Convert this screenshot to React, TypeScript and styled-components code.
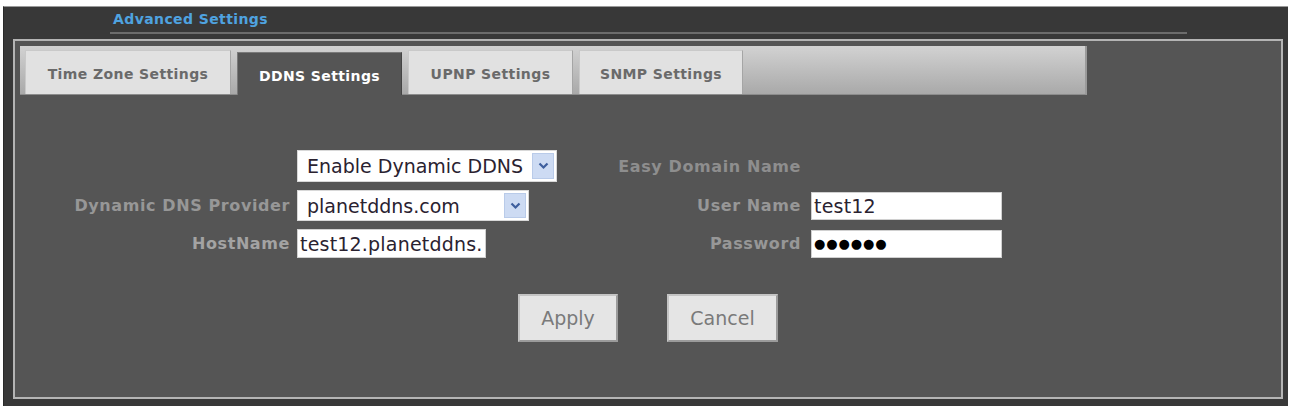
import React, {FC} from 'react';
import styled, {createGlobalStyle} from 'styled-components';

const GlobalStyle = createGlobalStyle`
  html, body {
    margin: 0;
    padding: 0;
    background: #ffffff;
  }
  body {
    font-family: "DejaVu Sans", Verdana, sans-serif;
  }
`;

const Page = styled.div`
  padding: 6px 5px 0 3px;
  width: 1285px;
`;

const Frame = styled.div`
  box-sizing: border-box;
  width: 1285px;
  height: 400px;
  background: #383838;
  border-top: 1px solid #9a9a9a;
  border-left: 1px solid #2a2a2a;
  display: flex;
  flex-direction: column;
`;

const Header = styled.div`
  box-sizing: border-box;
  margin-left: 106px;
  width: 1077px;
  height: 27px;
  padding: 4px 0 0 3px;
  border-bottom: 2px solid #6c6c6c;
  color: #4fa3e0;
  font-size: 14px;
  font-weight: bold;
  letter-spacing: 0.4px;
`;

const Panel = styled.div`
  box-sizing: border-box;
  margin: 5px 0 0 9px;
  width: 1270px;
  height: 360px;
  background: #555555;
  border: 2px solid #b4b4b4;
  padding: 5px;
  display: flex;
  flex-direction: column;
`;

const TabBar = styled.div`
  box-sizing: border-box;
  width: 1067px;
  height: 49px;
  padding-left: 5px;
  display: flex;
  align-items: flex-end;
  gap: 6px;
  background: linear-gradient(#d2d2d2, #a9a9a9);
  border-right: 2px solid #9a9a9a;
  border-bottom: 1px solid #8c8c8c;
`;

const Tab = styled.div<{$active?: boolean; $width: number}>`
  box-sizing: border-box;
  width: ${p => p.$width}px;
  height: ${p => (p.$active ? 43 : 44)}px;
  margin-bottom: ${p => (p.$active ? -1 : 0)}px;
  display: flex;
  align-items: center;
  justify-content: center;
  padding-top: 3px;
  font-size: 14px;
  font-weight: bold;
  letter-spacing: 0.4px;
  color: ${p => (p.$active ? '#ffffff' : '#6a6a6a')};
  background: ${p => (p.$active ? '#555555' : '#e1e1e1')};
  border: 1px solid ${p => (p.$active ? '#7a7a7a' : '#c9c9c9')};
  border-bottom: none;
  border-right-color: ${p => (p.$active ? '#444' : '#a5a5a5')};
`;

const Form = styled.div`
  margin-top: 55px;
  display: grid;
  grid-template-columns: 270px 259px 241px 191px;
  grid-auto-rows: auto;
  column-gap: 7px;
  row-gap: 8px;
  align-items: center;
`;

const Label = styled.div<{$tone?: string}>`
  justify-self: end;
  font-size: 16px;
  font-weight: bold;
  letter-spacing: 0.6px;
  color: ${p => p.$tone || '#979797'};
  white-space: nowrap;
`;

const RightLabel = styled(Label)`
  margin-right: 3px;
`;

const SelectBox = styled.div<{$width: number; $height: number}>`
  box-sizing: border-box;
  width: ${p => p.$width}px;
  height: ${p => p.$height}px;
  background: #ffffff;
  border: 1px solid #d8d8d8;
  display: flex;
  align-items: center;
  padding: 2px 2px 2px 9px;
  font-size: 19px;
  color: #2a2230;
`;

const SelectText = styled.span`
  flex: 1;
  white-space: nowrap;
`;

const ArrowBox = styled.span`
  box-sizing: border-box;
  width: 22px;
  align-self: stretch;
  background: #cddbf3;
  border: 1px solid #b9cbe9;
  display: flex;
  align-items: center;
  justify-content: center;
`;

const TextBox = styled.div<{$width: number; $height: number}>`
  box-sizing: border-box;
  width: ${p => p.$width}px;
  height: ${p => p.$height}px;
  background: #ffffff;
  border: 1px solid #d0d0d0;
  display: flex;
  align-items: center;
  padding: 0 2px;
  font-size: 19px;
  letter-spacing: 0.2px;
  color: #2a2230;
  white-space: nowrap;
`;

const Dots = styled.span`
  font-size: 13px;
  letter-spacing: 0.9px;
  color: #000;
`;

const Buttons = styled.div`
  margin-top: 36px;
  display: flex;
  justify-content: center;
  gap: 49px;
`;

const Button = styled.button<{$width: number}>`
  box-sizing: border-box;
  width: ${p => p.$width}px;
  height: 48px;
  background: #e5e5e5;
  border: 2px solid #9b9b9b;
  border-top-color: #c4c4c4;
  border-left-color: #c4c4c4;
  font-family: "DejaVu Sans", Verdana, sans-serif;
  font-size: 19px;
  color: #7a7a7a;
  padding: 0;
`;

const Chevron: FC = () => (
  <svg width="11" height="8" viewBox="0 0 11 8">
    <path
      d="M1.5 1.5 L5.5 5.5 L9.5 1.5"
      fill="none"
      stroke="#3e5f9e"
      strokeWidth="2.2"
    />
  </svg>
);

const tabs = [
  {name: 'Time Zone Settings', width: 206},
  {name: 'DDNS Settings', width: 165, active: true},
  {name: 'UPNP Settings', width: 165},
  {name: 'SNMP Settings', width: 164},
];

const App: FC = () => (
  <Page>
    <GlobalStyle />
    <Frame>
      <Header>Advanced Settings</Header>
      <Panel>
        <TabBar>
          {tabs.map(t => (
            <Tab key={t.name} $active={t.active} $width={t.width}>
              {t.name}
            </Tab>
          ))}
        </TabBar>

        <Form>
          <div />
          <SelectBox $width={260} $height={32}>
            <SelectText>Enable Dynamic DDNS</SelectText>
            <ArrowBox>
              <Chevron />
            </ArrowBox>
          </SelectBox>
          <RightLabel $tone="#8e8e8e">Easy Domain Name</RightLabel>
          <div />

          <Label>Dynamic DNS Provider</Label>
          <SelectBox $width={232} $height={31}>
            <SelectText>planetddns.com</SelectText>
            <ArrowBox>
              <Chevron />
            </ArrowBox>
          </SelectBox>
          <RightLabel>User Name</RightLabel>
          <TextBox $width={191} $height={28}>test12</TextBox>

          <Label $tone="#a3a3a3">HostName</Label>
          <TextBox $width={189} $height={29}>test12.planetddns.</TextBox>
          <RightLabel>Password</RightLabel>
          <TextBox $width={191} $height={28}>
            <Dots>●●●●●●</Dots>
          </TextBox>
        </Form>

        <Buttons>
          <Button $width={100}>Apply</Button>
          <Button $width={111}>Cancel</Button>
        </Buttons>
      </Panel>
    </Frame>
  </Page>
);

export default App;
